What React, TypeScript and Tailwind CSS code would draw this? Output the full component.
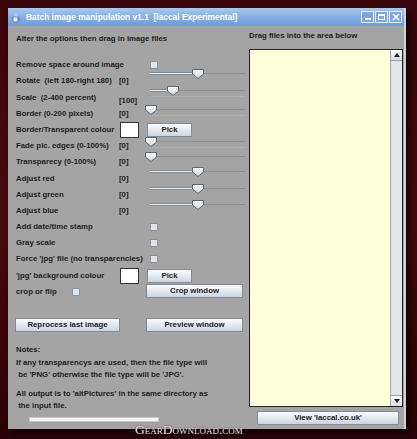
import React from 'react';

const txt = 'text-[7.8px] font-bold text-[#1c1c1c] leading-none whitespace-pre';

function Slider({ pos, ticks = false }: { pos: number; ticks?: boolean }) {
  // pos = thumb centre in px from slider's left edge
  return (
    <div className="relative w-[95px] h-[14px]">
      <div className="absolute left-0 right-0 top-[4px] h-[1px] bg-[#8a9098]" />
      <div className="absolute left-0 top-[3px] h-[3px] bg-[#e8eef6] border-y border-[#7d8894]" style={{ width: pos }} />
      {ticks && (
        <div className="absolute left-0 right-0 top-[10px] h-[3px] border-t border-dotted border-[#b4b4b4]" />
      )}
      <svg className="absolute top-0" style={{ left: pos - 6 }} width="12" height="10" viewBox="0 0 12 10">
        <defs>
          <linearGradient id="tg" x1="0" y1="0" x2="0" y2="1">
            <stop offset="0" stopColor="#ffffff" />
            <stop offset="1" stopColor="#c9d3dd" />
          </linearGradient>
        </defs>
        <polygon points="0.5,0.5 11.5,0.5 11.5,5 6,9.5 0.5,5" fill="url(#tg)" stroke="#5d6873" strokeWidth="1" />
      </svg>
    </div>
  );
}

function Check() {
  return <div className="w-[8px] h-[8px] bg-[#dfe4ea] border border-[#8b949c]" />;
}

function Btn({ label, w }: { label: string; w: string }) {
  return (
    <div
      className={`${w} h-[14px] flex items-center justify-center bg-gradient-to-b from-[#fbfdff] to-[#ccd6e0] border border-[#7f8c98] ${txt}`}
    >
      {label}
    </div>
  );
}

function Swatch() {
  return <div className="w-[19px] h-[16px] bg-white border border-[#333]" />;
}

type Row = {
  label: string;
  value?: string;
  ctrl?: React.ReactNode;
  valueLow?: boolean;
};

export default function App() {
  const rows: Row[] = [
    { label: 'Remove space around image', ctrl: <div className="pb-[1px]"><Check /></div> },
    { label: 'Rotate  (left 180-right 180)', value: '[0]', ctrl: <div className="mb-[11px]"><Slider pos={48} /></div> },
    { label: 'Scale  (2-400 percent)', value: '[100]', valueLow: true, ctrl: <div className="mb-[8px]"><Slider pos={23} ticks /></div> },
    { label: 'Border (0-200 pixels)', value: '[0]', ctrl: <div className="mb-[4px]"><Slider pos={1} ticks /></div> },
    {
      label: 'Border/Transparent colour',
      ctrl: (
        <div className="flex items-center ml-[-30px] gap-[8px]">
          <Swatch />
          <Btn label="Pick" w="w-[45px]" />
        </div>
      ),
    },
    { label: 'Fade pic. edges (0-100%)', value: '[0]', ctrl: <div className="mb-[4px]"><Slider pos={1} ticks /></div> },
    { label: 'Transparecy (0-100%)', value: '[0]', ctrl: <div className="mb-[6px]"><Slider pos={1} /></div> },
    { label: 'Adjust red', value: '[0]', ctrl: <div className="mb-[8px]"><Slider pos={48} /></div> },
    { label: 'Adjust green', value: '[0]', ctrl: <div className="mb-[8px]"><Slider pos={48} /></div> },
    { label: 'Adjust blue', value: '[0]', ctrl: <div className="mb-[8px]"><Slider pos={48} /></div> },
    { label: 'Add date/time stamp', ctrl: <Check /> },
    { label: 'Gray scale', ctrl: <Check /> },
    { label: "Force 'jpg' file (no transparencies)", ctrl: <Check /> },
    {
      label: "'jpg' background colour",
      ctrl: (
        <div className="flex items-center ml-[-30px] gap-[8px]">
          <Swatch />
          <Btn label="Pick" w="w-[45px]" />
        </div>
      ),
    },
  ];

  return (
    <div
      className="relative w-[417px] h-[439px] overflow-hidden bg-gradient-to-b from-[#3a060c] via-[#4a0a12] to-[#2a0306] pl-[8px] pt-[8px]"
      style={{ fontFamily: '"Liberation Sans", Arial, sans-serif' }}
    >
      <div className="w-[398px] h-[421px] flex flex-col border-r-2 border-[#cfd2d6] shadow-[4px_4px_8px_rgba(0,0,0,0.7)]">
        {/* title bar */}
        <div className="h-[18px] flex items-center bg-gradient-to-b from-[#a9c9ef] via-[#86afe4] to-[#6f9bd8] pl-[3px] pr-[2px]">
          <svg width="11" height="11" viewBox="0 0 11 11" className="mr-[4px]">
            <path d="M2 5h5v3a2 2 0 0 1-2 2H4a2 2 0 0 1-2-2z" fill="#eef4fb" stroke="#4f6f99" strokeWidth="0.8" />
            <path d="M7 6h1.2a1 1 0 0 1 0 2H7" fill="none" stroke="#4f6f99" strokeWidth="0.8" />
            <path d="M4 1.5c-1 1 1 1.5 0 3M5.8 1.5c-1 1 1 1.5 0 3" fill="none" stroke="#d8e6f6" strokeWidth="0.8" />
          </svg>
          <span className="text-[8.4px] font-bold text-white leading-none whitespace-pre">
            Batch image manipulation v1.1  [laccal Experimental]
          </span>
          <div className="ml-auto flex gap-[1px]">
            <div className="w-[13px] h-[12px] border border-[#e4eefa] bg-[#7ea7de] flex items-end justify-center pb-[2px]">
              <div className="w-[6px] h-[2px] bg-white" />
            </div>
            <div className="w-[13px] h-[12px] border border-[#e4eefa] bg-[#7ea7de] flex items-center justify-center">
              <div className="w-[7px] h-[6px] border border-white border-t-2" />
            </div>
            <div className="w-[13px] h-[12px] border border-[#e4eefa] bg-[#7ea7de] flex items-center justify-center">
              <svg width="8" height="8" viewBox="0 0 8 8">
                <path d="M1 1L7 7M7 1L1 7" stroke="white" strokeWidth="1.6" />
              </svg>
            </div>
          </div>
        </div>

        {/* content */}
        <div className="flex-1 flex bg-[#a4a4a4]">
          {/* left column */}
          <div className="w-[240px] pl-[8px] pt-[5px] flex flex-col">
            <div className={`h-[16px] flex items-center ${txt}`}>Alter the options then drag in image files</div>
            <div className="h-[10px]" />
            {rows.map((r) => (
              <div key={r.label} className="h-[16.2px] flex items-center">
                <div className={`w-[103px] ${txt}`}>{r.label}</div>
                <div className={`w-[31px] ${txt} ${r.valueLow ? 'mt-[6px]' : ''}`}>{r.value ?? ''}</div>
                {r.ctrl}
              </div>
            ))}
            <div className="h-[16.2px] flex items-center">
              <div className={`w-[56px] ${txt}`}>crop or flip</div>
              <div className="w-[78px]">
                <Check />
              </div>
              <div className="ml-[-4px] mb-[2px]">
                <Btn label="Crop window" w="w-[97px]" />
              </div>
            </div>
            <div className="mt-[18px] flex items-center">
              <div className="ml-[-1px]">
                <Btn label="Reprocess last image" w="w-[105px]" />
              </div>
              <div className="ml-[26px]">
                <Btn label="Preview window" w="w-[97px]" />
              </div>
            </div>
            <div className="mt-[12px] flex flex-col">
              <div className={`h-[12.5px] flex items-center ${txt}`}>Notes:</div>
              <div className={`h-[12.5px] flex items-center ${txt}`}>If any transparencys are used, then the file type will</div>
              <div className={`h-[12.5px] flex items-center ${txt}`}> be 'PNG' otherwise the file type will be 'JPG'.</div>
              <div className="h-[6px]" />
              <div className={`h-[12.5px] flex items-center ${txt}`}>All output is to 'altPictures' in the same directory as</div>
              <div className={`h-[12.5px] flex items-center ${txt}`}> the input file.</div>
            </div>
            <div className="mt-[5px] ml-[13px] w-[130px] h-[5px] bg-[#f4f4f4] border border-[#c8c8c8]" />
          </div>

          {/* right column */}
          <div className="flex-1 flex flex-col pl-[1px] pr-[1px] pt-[3px]">
            <div className={`h-[14px] flex items-center ${txt}`}>Drag files into the area below</div>
            <div className="mt-[6px] h-[358px] flex border border-[#222]">
              <div className="flex-1 bg-[#ffffd9]" />
              <div className="w-[12px] bg-[#e3e7ec] border-l border-[#9aa3ac] flex flex-col justify-between">
                <div className="h-[11px] bg-gradient-to-b from-white to-[#d4dbe3] border-b border-[#9aa3ac] flex items-center justify-center">
                  <svg width="6" height="4" viewBox="0 0 6 4"><path d="M0 4L3 0L6 4z" fill="#222" /></svg>
                </div>
                <div className="h-[11px] bg-gradient-to-b from-white to-[#d4dbe3] border-t border-[#9aa3ac] flex items-center justify-center">
                  <svg width="6" height="4" viewBox="0 0 6 4"><path d="M0 0L3 4L6 0z" fill="#222" /></svg>
                </div>
              </div>
            </div>
            <div className="mt-[4px] ml-[8px]">
              <Btn label="View 'laccal.co.uk'" w="w-[142px]" />
            </div>
          </div>
        </div>
      </div>

      {/* watermark */}
      <div
        className="absolute left-[135px] top-[423px] text-[13.5px] leading-none text-[#e8e4e4]"
        style={{ fontFamily: '"Liberation Serif", "Times New Roman", serif', fontVariant: 'small-caps', textShadow: '0 0 2px rgba(0,0,0,0.8)' }}
      >
        GearDownload.com
      </div>
    </div>
  );
}
